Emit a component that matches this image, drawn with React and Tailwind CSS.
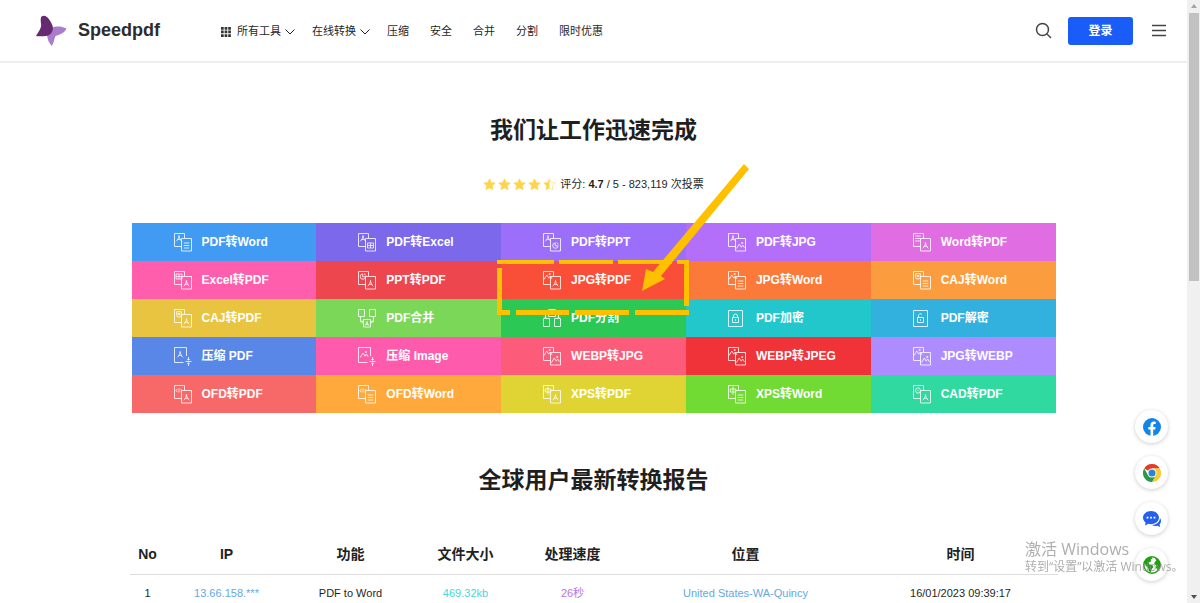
import React from 'react';
import clsx from 'clsx';

const tools = [
  { label: 'PDF转Word', back: 'pdf', front: 'doc', bg: 'bg-[#429bf2]' },
  { label: 'PDF转Excel', back: 'pdf', front: 'sheet', bg: 'bg-[#7b68ea]' },
  { label: 'PDF转PPT', back: 'pdf', front: 'chart', bg: 'bg-[#9b6ffa]' },
  { label: 'PDF转JPG', back: 'pdf', front: 'image', bg: 'bg-[#b36ffa]' },
  { label: 'Word转PDF', back: 'doc', front: 'pdf', bg: 'bg-[#e06de2]' },
  { label: 'Excel转PDF', back: 'sheet', front: 'pdf', bg: 'bg-[#fe5eab]' },
  { label: 'PPT转PDF', back: 'chart', front: 'pdf', bg: 'bg-[#ed464f]' },
  { label: 'JPG转PDF', back: 'image', front: 'pdf', bg: 'bg-[#f94e38]', marked: true },
  { label: 'JPG转Word', back: 'image', front: 'doc', bg: 'bg-[#fc7a39]' },
  { label: 'CAJ转Word', back: 'caj', front: 'doc', bg: 'bg-[#fb9d3e]' },
  { label: 'CAJ转PDF', back: 'caj', front: 'pdf', bg: 'bg-[#e9c441]' },
  { label: 'PDF合并', kind: 'merge', bg: 'bg-[#7bd757]' },
  { label: 'PDF分割', kind: 'split', bg: 'bg-[#2cc855]' },
  { label: 'PDF加密', kind: 'lock', bg: 'bg-[#21c7ca]' },
  { label: 'PDF解密', kind: 'unlock', bg: 'bg-[#33b1de]' },
  { label: '压缩 PDF', kind: 'compress', back: 'pdf', bg: 'bg-[#5887e7]' },
  { label: '压缩 Image', kind: 'compress', back: 'image', bg: 'bg-[#fe5bad]' },
  { label: 'WEBP转JPG', back: 'image', front: 'image', bg: 'bg-[#fc5b79]' },
  { label: 'WEBP转JPEG', back: 'image', front: 'image', bg: 'bg-[#f03239]' },
  { label: 'JPG转WEBP', back: 'image', front: 'image', bg: 'bg-[#ae8cff]' },
  { label: 'OFD转PDF', back: 'code', front: 'pdf', bg: 'bg-[#f66968]' },
  { label: 'OFD转Word', back: 'code', front: 'doc', bg: 'bg-[#ffa93c]' },
  { label: 'XPS转PDF', back: 'xps', front: 'pdf', bg: 'bg-[#dfd433]' },
  { label: 'XPS转Word', back: 'xps', front: 'doc', bg: 'bg-[#71da33]' },
  { label: 'CAD转PDF', back: 'cad', front: 'pdf', bg: 'bg-[#2fd99f]' },
];

const columns = [
  { title: 'No', width: 'w-[36px]' },
  { title: 'IP', width: 'w-[122px]' },
  { title: '功能', width: 'w-[126px]' },
  { title: '文件大小', width: 'w-[104px]' },
  { title: '处理速度', width: 'w-[110px]' },
  { title: '位置', width: 'w-[236px]' },
  { title: '时间', width: 'w-auto' },
];

// marks that sit inside a page, drawn around 0,0
const marks = {
  pdf: <path d="M-2.8 2.8C-1.3 1.6-.1-.8 0-3 .1-.8 1.3 1.600 2.800 2.800M-1.800 1.300C-.6.7.6.7 1.800 1.300" />,
  doc: <path d="M-2.8-2.500h5.600M-2.800 0h5.600M-2.800 2.500h5.600" />,
  sheet: <path d="M-3-2.500h6v5h-6zM-3 0h6M0-2.500v5" />,
  chart: <path d="M2.600.3A2.700 2.700 0 1 1-.3-2.600V.3zM1-2.800A2.600 2.600 0 0 1 2.800-1" />,
  image: <path d="M-4 3-1.200-1.500.8 1.700 2.200-.5 4 2.400M1.200-3h1v1h-1z" />,
  caj: <path d="M-2.400-2.800h4.800v3A2.400 2.400 0 0 1-2.400.2zM-1-1h2v1h-2z" />,
  code: <path d="M-1.600-1.700-3 0l1.400 1.700M1.600-1.700 3 0 1.600 1.700M0-2v4" />,
  xps: <path d="M0-4v8M-2.800-1.500h5.600v3h-5.600z" />,
  cad: <path d="M-1.300-2.500h2.600L2.700 0 1.300 2.500h-2.600L-2.700 0zM-.5 0h1" />,
};

const ToolIcon = ({ kind, back, front }) => (
  <svg
    aria-hidden="true"
    viewBox="0 0 18 19"
    className="w-[18px] h-[19px] shrink-0"
    fill="none"
    stroke="currentColor"
    strokeWidth="0.9"
    opacity="0.9"
  >
    {!kind && (
      <>
        <path d="M7.500 13.500h-7v-13h10V5" />
        <path d="M7.500 5.500h10v12.500h-10z" />
        <g transform="translate(5 5.500)">{marks[back]}</g>
        <g transform="translate(12.500 12.500)">{marks[front]}</g>
      </>
    )}
    {kind === 'compress' && (
      <>
        <path d="M9.500 15.500h-9V.5h12V9" />
        <g transform="translate(6.200 7.500)">{marks[back]}</g>
        <path d="M11.500 14.500h6M14.500 10v3M13.300 12l1.200 1.300 1.200-1.300M14.500 19v-3M13.300 17l1.200-1.300 1.200 1.300" />
      </>
    )}
    {kind === 'merge' && (
      <>
        <path d="M.5.5h6v7h-6zM11.500.5h6v7h-6zM5.500 10.500h7v7.500h-7zM2.500 7.500v5.300H5M15.500 7.500v5.300H13M3.700 11.500 5 12.800l-1.300 1.300M14.300 11.500 13 12.800l1.300 1.300" />
        <path d="M7 16.500c1-1 1.800-2.500 2-4 .2 1.500 1 3 2 4M7.700 15.500h2.600" />
      </>
    )}
    {kind === 'split' && (
      <path d="M.5 9.500h6v8h-6zM11.500 9.500h6v8h-6zM5.500.5h7v7h-7zM5.500 4h-3v5M12.500 4h3v5M1.200 7.700l1.300 1.300 1.300-1.300M14.200 7.700l1.300 1.300 1.300-1.300" />
    )}
    {(kind === 'lock' || kind === 'unlock') && (
      <>
        <path d="M.5 1.500h14v16H.5z" />
        <path d="M4.500 8.500h6v5h-6zM7.500 10.300v1.500" />
        <path d={kind === 'lock' ? 'M5.500 8.500V7a2 2 0 0 1 4 0v1.500' : 'M5.500 8.500V7a2 2 0 0 1 3.500-1.500'} />
      </>
    )}
  </svg>
);

// dashed frame with an arrow pointing at the highlighted tool
const Callout = () => (
  <svg
    aria-hidden="true"
    viewBox="0 0 256 154"
    className="absolute -left-[5px] -top-[97px] z-10 w-[256px] h-[154px] pointer-events-none"
    fill="#ffc000"
  >
    <path d="M1 96h57v4H1zM63 96h54v4H63zM122 96h54v4h-54zM181 96h12v4h-12z" />
    <path d="M1 104h5v42h8v5H1zM20 146h53v5H20zM79 146h54v5H79zM139 146h54v5h-54z" />
    <path d="M188 96h5v46h-5z" />
    <path d="m248 0 5 5-88 107 4 3-23 12 4-22 7 3z" />
  </svg>
);

const Chevron = () => (
  <svg aria-hidden="true" viewBox="0 0 10 6" className="w-[10px] h-[6px]" fill="none" stroke="currentColor">
    <path d="M.5.5 5 5 9.500.5" />
  </svg>
);

const Star = ({ half }) => (
  <svg aria-hidden="true" viewBox="0 0 24 24" className="w-[13px] h-[13px]">
    <path
      d="m12 1.500 3.300 6.800 7.400 1-5.400 5.200 1.300 7.400L12 18.300l-6.600 3.600 1.300-7.400L1.300 9.300l7.400-1z"
      fill={half ? 'none' : '#fbd54a'}
      stroke="#fbd54a"
      strokeWidth="1"
    />
    {half && <path d="M12 1.500v16.800l-6.600 3.600 1.300-7.400L1.300 9.300l7.400-1z" fill="#fbd54a" />}
  </svg>
);

const Logo = () => (
  <svg aria-hidden="true" viewBox="0 0 32 32" className="w-8 h-8">
    <path d="M15 13c5-2 11-2.500 16.500.5-2 4.500-7 6.500-11 7.500-1.500 3-1.500 7-3.700 10-3-3-4.300-7-4.800-11z" fill="#ab7ccb" />
    <path d="M6.500 1.500c5-3 9 4.500 11 9 1.500 6-2 10-6.500 10.500-4 .2-7 .5-10 0C3 17 7 13 6 8.500 5.600 6 5.500 3 6.500 1.500z" fill="#662a72" />
  </svg>
);

const Header = () => (
  <header className="flex items-center h-[63px] border-b-2 border-[#eeeeee] pl-[35px] pr-[21px]">
    <a href="#" className="flex items-center gap-[11px] text-[18px] font-bold text-[#2d2d2d]">
      <Logo />
      Speedpdf
    </a>
    <nav className="flex items-center gap-[17px] ml-[61px] pt-[2px] text-[11px] whitespace-nowrap">
      <div className="flex items-center gap-[17px]">
        <button className="flex items-center gap-1">
          <svg aria-hidden="true" viewBox="0 0 10 10" className="w-[10px] h-[10px] mr-[2px]" fill="#333">
            <path d="M0 0h2.700v2.700H0zM3.600 0h2.700v2.700H3.600zM7.200 0h2.700v2.700H7.200zM0 3.600h2.700v2.700H0zM3.600 3.600h2.700v2.700H3.600zM7.200 3.600h2.700v2.700H7.200zM0 7.200h2.700v2.700H0zM3.600 7.200h2.700v2.700H3.600zM7.200 7.200h2.700v2.700H7.200z" />
          </svg>
          所有工具
          <Chevron />
        </button>
        <button className="flex items-center gap-1">
          在线转换
          <Chevron />
        </button>
      </div>
      <div className="flex items-center gap-[21px]">
        {['压缩', '安全', '合并', '分割', '限时优惠'].map((item) => (
          <a key={item} href="#">{item}</a>
        ))}
      </div>
    </nav>
    <div className="flex items-center ml-auto">
      <button aria-label="搜索" className="mr-4">
        <svg viewBox="0 0 17 17" className="w-[17px] h-[17px]" fill="none" stroke="#444" strokeWidth="1.500">
          <circle cx="7.500" cy="7.500" r="6" />
          <path d="m12 12 4 4" />
        </svg>
      </button>
      <button className="w-[65px] h-[28px] rounded-[3px] bg-[#1a5cf8] text-white text-[12px] font-bold">登录</button>
      <button aria-label="菜单" className="ml-[19px]">
        <svg viewBox="0 0 14 13" className="w-[14px] h-[13px]" stroke="#444" strokeWidth="1.500">
          <path d="M0 1.500h14M0 6.500h14M0 11.500h14" />
        </svg>
      </button>
    </div>
  </header>
);

const ReportTable = () => (
  <table className="w-full max-w-[928px] mx-auto mt-[38px] table-fixed text-center text-[11px]">
    <thead>
      <tr className="h-10 border-b border-[#dddddd] text-[14px] text-[#222]">
        {columns.map((col) => (
          <th key={col.title} className={clsx('pt-[2px]', col.width)}>{col.title}</th>
        ))}
      </tr>
    </thead>
    <tbody>
      <tr className="h-[38px]">
        <td>1</td>
        <td className="text-[#62a8e5]">13.66.158.***</td>
        <td>PDF to Word</td>
        <td className="text-[#4dd5d8]">469.32kb</td>
        <td className="text-[#bb71dc]">26秒</td>
        <td className="text-[#62a8e5]">United States-WA-Quincy</td>
        <td>16/01/2023 09:39:17</td>
      </tr>
    </tbody>
  </table>
);

const FloatButton = ({ label, children }) => (
  <button
    aria-label={label}
    className="flex items-center justify-center w-[33px] h-[33px] rounded-full bg-white shadow-[0_1px_4px_rgba(0,0,0,0.2)]"
  >
    <svg viewBox="0 0 18 18" className="w-[18px] h-[18px]">{children}</svg>
  </button>
);

const FloatBar = () => (
  <div className="fixed right-8 bottom-[22px] flex flex-col gap-[13px]">
    <FloatButton label="Facebook">
      <circle cx="9" cy="9" r="9" fill="#1285e8" />
      <path
        d="M7.500 17.900v-6.300H5.300V9h2.200V7.100c0-2.300 1.300-3.500 3.300-3.500.9 0 1.900.2 1.900.2v2.100h-1.100c-1.100 0-1.400.7-1.400 1.400V9h2.400l-.4 2.600h-2v6.300a9 9 0 0 1-2.700 0z"
        fill="#fff"
      />
    </FloatButton>
    <FloatButton label="Chrome">
      <path d="M9 9 1.200 4.500A9 9 0 0 1 16.800 4.500H9z" fill="#e33b2e" />
      <path d="M16.800 4.500A9 9 0 0 1 9 18l3.900-6.750L9 4.500z" fill="#fcc934" />
      <path d="M1.200 4.500A9 9 0 0 0 9 18l3.900-6.750H5.100z" fill="#2b9a48" />
      <circle cx="9" cy="9" r="4.500" fill="#fff" />
      <circle cx="9" cy="9" r="3.500" fill="#2587d5" />
    </FloatButton>
    <FloatButton label="在线客服">
      <path d="M8 1c4.400 0 8 2.900 8 6.600s-3.600 6.600-8 6.600c-.9 0-1.800-.1-2.600-.4L2 15.500l.6-3C1 11.300 0 9.600 0 7.600 0 3.900 3.600 1 8 1z" fill="#2460ec" />
      <path d="M17 8c.7 1 1 2 1 3 0 1.300-.5 2.400-1.400 3.300l.5 2.700-2.700-1.200c-1.900.6-4 .2-5.400-.8 4.500-.2 7.700-2.900 8-7z" fill="#2460ec" />
      <path d="M3.600 6.800h1.800v1.800H3.600zM7.100 6.800h1.800v1.800H7.100zM10.600 6.800h1.800v1.800h-1.800z" fill="#fff" />
    </FloatButton>
    <FloatButton label="语言">
      <circle cx="9" cy="9" r="8.200" fill="#fff" stroke="#1fa00f" strokeWidth="1.400" />
      <path d="M1.200 6C2.500 3 5 1 8 .8l1.500 1.700-2 1.200.7 1.600-2.400 1.200.2 1.800 3.200.6 1.300 2.200-2 2.200-.5 3-2-1-.8-3.300L2.500 9.500zM12 2l3.500 1.500L17.300 8l-.8 4-2 2-1.600-2.500.6-2-2.200-1.500.4-2.200 1.700-.8z" fill="#1fa00f" />
    </FloatButton>
  </div>
);

const ScrollBar = () => (
  <div aria-hidden="true" className="flex flex-col items-center justify-between w-[13px] shrink-0 bg-[#f0f0f0] py-1">
    <div className="flex flex-col items-center gap-[5px] h-1/2">
      <svg viewBox="0 0 6 4" className="w-[6px] h-[4px] shrink-0" fill="#a3a3a3">
        <path d="M0 4 3 0l3 4z" />
      </svg>
      <div className="w-[10px] h-[90%] bg-[#c1c1c1]" />
    </div>
    <svg viewBox="0 0 6 4" className="w-[6px] h-[4px] shrink-0" fill="#505050">
      <path d="m0 0 3 4 3-4z" />
    </svg>
  </div>
);

const App = () => {
  return (
    <div className="flex h-screen overflow-hidden bg-white text-[#1f1f1f] font-['Liberation_Sans','Noto_Sans_CJK_SC',sans-serif]">
      <div className="flex-1 min-w-0 overflow-hidden">
        <Header />
        <main>
          <h1 className="pt-[51px] text-center text-[23px] leading-8 font-bold">我们让工作迅速完成</h1>
          <div className="flex items-center justify-center gap-1 mt-[30px] text-[11px] leading-4">
            <span className="flex gap-[2px]">
              <Star />
              <Star />
              <Star />
              <Star />
              <Star half />
            </span>
            <p>评分: <b>4.7</b> / 5 - 823,119 次投票</p>
          </div>

          <ul className="grid grid-cols-5 max-w-[924px] mx-auto mt-[31px]">
            {tools.map((tool) => (
              <li key={tool.label} className="relative">
                <a
                  href="#"
                  className={clsx('flex items-center gap-[10px] h-[38px] pl-[42px] text-white text-[12px] font-bold', tool.bg)}
                >
                  <ToolIcon kind={tool.kind} back={tool.back} front={tool.front} />
                  {tool.label}
                </a>
                {tool.marked && <Callout />}
              </li>
            ))}
          </ul>

          <h2 className="mt-[51px] text-center text-[23px] leading-8 font-bold">全球用户最新转换报告</h2>
          <ReportTable />
        </main>
      </div>
      <ScrollBar />
      <FloatBar />

      <div className="fixed right-6 bottom-7 w-[151px] whitespace-nowrap text-[#8a8a8a]/70 font-['Open_Sans','Noto_Sans_CJK_SC',sans-serif] pointer-events-none">
        <p className="text-[16px] leading-5">激活 Windows</p>
        <p className="text-[12px] leading-4">转到“设置”以激活 Windows。</p>
      </div>
    </div>
  );
};

export default App;
